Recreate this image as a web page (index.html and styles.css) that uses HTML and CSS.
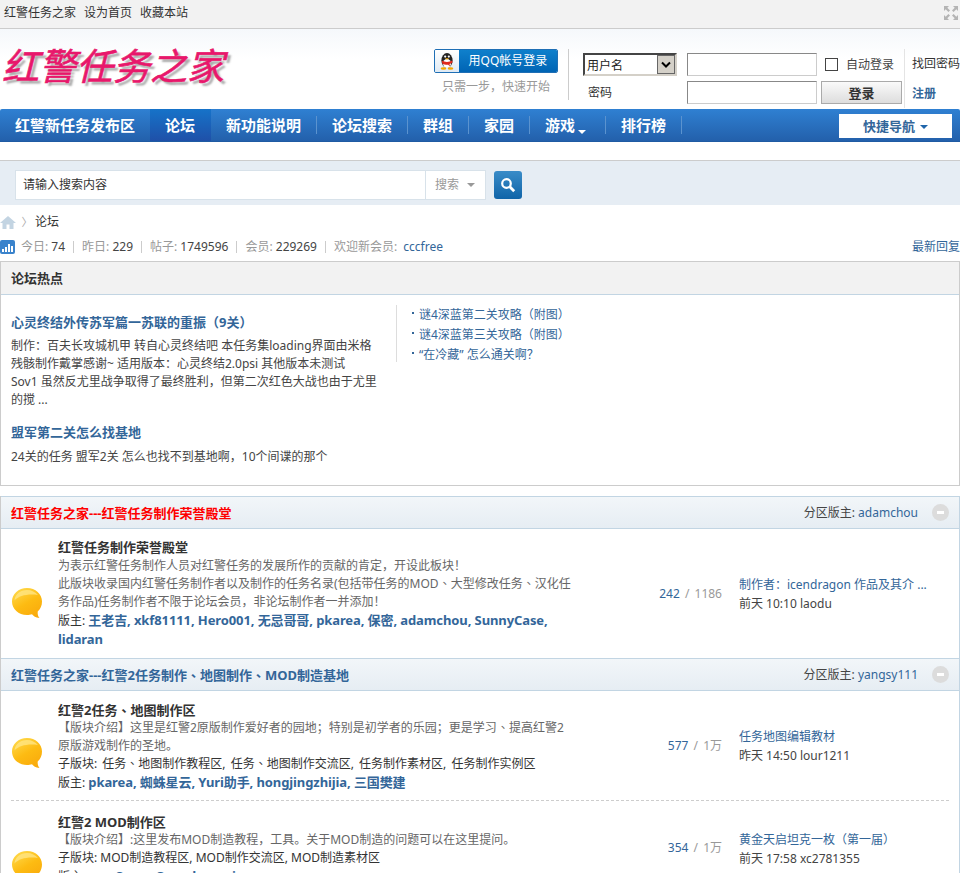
FILE: index.html
```html
<!DOCTYPE html>
<html lang="zh">
<head>
<meta charset="utf-8">
<title>红警任务之家</title>
<link rel="stylesheet" href="styles.css">
</head>
<body>
<div class="topbar">
  <div class="toplinks"><a>红警任务之家</a><a>设为首页</a><a>收藏本站</a></div>
  <svg class="expand" width="16" height="16" viewBox="0 0 16 16"><g fill="#b4b4b4"><path d="M1 1h5L4.3 2.7 7 5.4 5.4 7 2.7 4.3 1 6z"/><path d="M15 1v5l-1.7-1.7L10.6 7 9 5.4l2.7-2.7L10 1z"/><path d="M1 15v-5l1.7 1.7L5.4 9 7 10.6l-2.7 2.7L6 15z"/><path d="M15 15h-5l1.7-1.7L9 10.6 10.6 9l2.7 2.7L15 10z"/></g></svg>
</div>
<header class="hdr">
  <div class="logo">红警任务之家</div>
  <div class="login">
    <div class="qq">
      <div class="qqbtn">
        <span class="qqicon"><svg width="20" height="20" viewBox="0 0 20 20"><ellipse cx="10" cy="9.5" rx="5.6" ry="7.5" fill="#222"/><ellipse cx="10" cy="12.5" rx="4" ry="4.6" fill="#fff"/><circle cx="8.2" cy="5.6" r="1.1" fill="#fff"/><circle cx="11.8" cy="5.6" r="1.1" fill="#fff"/><path d="M8 7.2h4l-2 1.6z" fill="#f5a800"/><path d="M4.8 9.6c3 1.8 7.4 1.8 10.4 0l.3 2c-1 .8-2 1.2-3 1.4l.6 2.6-2-1.9c-1.5.2-3.600.1-5.800-1z" fill="#e02a1c"/><ellipse cx="6.500" cy="17.500" rx="2.800" ry="1.200" fill="#f5a800"/><ellipse cx="13.500" cy="17.500" rx="2.800" ry="1.200" fill="#f5a800"/></svg></span>
        <span class="qqtext">用QQ帐号登录</span>
      </div>
      <div class="qqsub">只需一步，快速开始</div>
    </div>
    <div class="form">
      <div class="sel"><span>用户名</span><i><svg width="10" height="8" viewBox="0 0 10 8"><path d="M1 1.500l4 4 4-4" fill="none" stroke="#000" stroke-width="2"/></svg></i></div>
      <input class="ipt" type="text" aria-label="用户名">
      <label class="auto"><span class="chk"></span>自动登录</label>
      <div class="pw">密码</div>
      <input class="ipt" type="password" aria-label="密码">
      <button class="sub">登录</button>
    </div>
    <div class="side"><a>找回密码</a><a class="reg">注册</a></div>
  </div>
</header>
<nav class="nav">
  <ul class="navlist">
    <li>红警新任务发布区</li>
    <li class="on">论坛</li>
    <li>新功能说明</li>
    <li>论坛搜索</li>
    <li>群组</li>
    <li>家园</li>
    <li class="drop">游戏<b class="wa"></b></li>
    <li>排行榜</li>
  </ul>
  <div class="quick">快捷导航<b class="ba"></b></div>
</nav>
<div class="search">
  <div class="sbox">
    <div class="skw">请输入搜索内容</div>
    <div class="stype">搜索<b class="ga"></b></div>
  </div>
  <div class="sbtn"><svg width="16" height="16" viewBox="0 0 16 16"><circle cx="6.500" cy="6.500" r="4.300" fill="none" stroke="#fff" stroke-width="2.200"/><path d="M9.800 9.800l4.400 4.400" stroke="#fff" stroke-width="2.800"/></svg></div>
</div>
<div class="crumb">
  <svg width="16" height="14" viewBox="0 0 16 14"><path d="M8 1L0 8h2.500v6h4V9.500h3V14h4V8H16z" fill="#c3d4e2"/></svg>
  <em>〉</em><span>论坛</span>
</div>
<div class="stats">
  <div class="statl">
    <svg class="bars" width="15" height="14" viewBox="0 0 15 14"><rect width="15" height="14" rx="2" fill="#3a83cc"/><g fill="#fff"><rect x="2" y="9" width="2" height="3"/><rect x="5" y="7" width="2" height="5"/><rect x="8" y="4" width="2" height="8"/><rect x="11" y="6" width="2" height="6"/></g></svg>
    <span class="st">今日: <b>74</b></span><i></i><span class="st">昨日: <b>229</b></span><i></i><span class="st">帖子: <b>1749596</b></span><i></i><span class="st">会员: <b>229269</b></span><i></i><span class="st">欢迎新会员: <a class="newm">cccfree</a></span>
  </div>
  <a>最新回复</a>
</div>
<section class="hot">
  <h2 class="hothd">论坛热点</h2>
  <div class="hotbd">
    <div class="hotl">
      <h3>心灵终结外传苏军篇一苏联的重振（9关）</h3>
      <p>制作：百夫长攻城机甲 转自心灵终结吧 本任务集loading界面由米格<br>残骸制作戴掌感谢~ 适用版本：心灵终结2.0psi 其他版本未测试<br>Sov1 虽然反尤里战争取得了最终胜利，但第二次红色大战也由于尤里<br>的搅 ...</p>
      <h3 class="h2nd">盟军第二关怎么找基地</h3>
      <p class="p2nd">24关的任务 盟军2关 怎么也找不到基地啊，10个间谍的那个</p>
    </div>
    <ul class="hotr">
      <li>谜4深蓝第二关攻略（附图）</li>
      <li>谜4深蓝第三关攻略（附图）</li>
      <li>“在冷藏” 怎么通关啊？</li>
    </ul>
  </div>
</section>
<section class="cat">
  <div class="cathd">
    <h2 class="red">红警任务之家---红警任务制作荣誉殿堂</h2>
    <div class="mod">分区版主: <a>adamchou</a></div>
    <span class="col"></span>
  </div>
  <div class="frow r1">
    <svg class="bub" width="32" height="32" viewBox="0 0 32 32"><use href="#bubble"/></svg>
    <div class="fmain">
      <h3>红警任务制作荣誉殿堂</h3>
      <p class="fd">为表示红警任务制作人员对红警任务的发展所作的贡献的肯定，开设此板块！<br>此版块收录国内红警任务制作者以及制作的任务名录(包括带任务的MOD<span class="dun">、</span>大型修改任务<span class="dun">、</span>汉化任务作品)任务制作者不限于论坛会员，非论坛制作者一并添加！</p>
      <p>版主: <a class="bl">王老吉, xkf81111, Hero001, 无忌哥哥, pkarea, 保密, adamchou, SunnyCase, lidaran</a></p>
    </div>
    <div class="fnum"><a>242</a> / <span>1186</span></div>
    <div class="flast"><a>制作者：icendragon 作品及其介 ...</a><div>前天 10:10 laodu</div></div>
  </div>
</section>
<section class="cat cat2">
  <div class="cathd">
    <h2>红警任务之家---红警2任务制作<span class="dun">、</span>地图制作<span class="dun">、</span>MOD制造基地</h2>
    <div class="mod">分区版主: <a>yangsy111</a></div>
    <span class="col"></span>
  </div>
  <div class="frow r2">
    <svg class="bub" width="32" height="32" viewBox="0 0 32 32"><use href="#bubble"/></svg>
    <div class="fmain">
      <h3>红警2任务<span class="dun">、</span>地图制作区</h3>
      <p class="fd">【版块介绍】这里是红警2原版制作爱好者的园地；特别是初学者的乐园；更是学习<span class="dun">、</span>提高红警2原版游戏制作的圣地。</p>
      <p class="subs">子版块: 任务<span class="dun">、</span>地图制作教程区, 任务<span class="dun">、</span>地图制作交流区, 任务制作素材区, 任务制作实例区</p>
      <p>版主: <a class="bl">pkarea, 蜘蛛星云, Yuri助手, hongjingzhijia, 三国樊建</a></p>
    </div>
    <div class="fnum"><a>577</a> / <span>1万</span></div>
    <div class="flast"><a>任务地图编辑教材</a><div>昨天 14:50 lour1211</div></div>
  </div>
  <div class="frow r3">
    <svg class="bub" width="32" height="32" viewBox="0 0 32 32"><use href="#bubble"/></svg>
    <div class="fmain">
      <h3>红警2 MOD制作区</h3>
      <p class="fd">【版块介绍】:这里发布MOD制造教程，工具。关于MOD制造的问题可以在这里提问。</p>
      <p>子版块: MOD制造教程区, MOD制作交流区, MOD制造素材区</p>
      <p>版主: <a class="bl">pzz, SunnyCase, kanegis</a></p>
    </div>
    <div class="fnum"><a>354</a> / <span>1万</span></div>
    <div class="flast"><a>黄金天启坦克一枚（第一届）</a><div>前天 17:58 xc2781355</div></div>
  </div>
</section>
<svg class="defs" width="0" height="0">
  <defs>
    <linearGradient id="bg" x1="0.200" y1="0" x2="0.800" y2="1"><stop offset="0" stop-color="#ffd94a"/><stop offset="0.500" stop-color="#fdbb12"/><stop offset="1" stop-color="#f9a90c"/></linearGradient>
    <g id="bubble"><path d="M16 1C7.500 1 1 7 1 14.500S7.500 28 16 28c2 0 3.500-.3 5-.8 1.500 2 3.500 3.300 7.500 3.800-1.500-1.500-2-3.800-1.800-6.500C29.500 22 31 18.500 31 14.500 31 7 24.500 1 16 1z" fill="url(#bg)"/><path d="M16 3C9 3 4 7.500 3.500 13.500 8 8.500 17 6.500 27 8c-2.500-3-6.500-5-11-5z" fill="#ffe789" opacity=".75"/></g>
  </defs>
</svg>
</body>
</html>
```
FILE: styles.css
```css
* { box-sizing: border-box; }
html, body { margin: 0; padding: 0; }
body { height: 873px; overflow: hidden; background: #fff; color: #444; font: 12px/18px "Noto Sans", "Noto Sans CJK SC", sans-serif; }
h2, h3, p, ul { margin: 0; padding: 0; }
ul { list-style: none; }
a { color: #369; }
.defs { position: absolute; }
.dun { display: inline-block; line-height: 1; font-family: "Noto Sans CJK TC", sans-serif; }

.topbar { height: 29px; background: #f2f2f2; border-bottom: 1px solid #ccc; display: flex; justify-content: space-between; align-items: center; padding: 0 1px 2px 4px; color: #333; }
.toplinks { display: flex; gap: 8px; }
.toplinks a { color: #333; }

.hdr { height: 80px; display: flex; justify-content: space-between; background: linear-gradient(#f5f8fb, #fff 30px); }
.logo { font: italic 400 37px/1 "Noto Sans CJK SC", sans-serif; -webkit-text-stroke: .6px #e8176b; color: #e8176b; text-shadow: 3px 3px 2px #aaa; padding: 17px 0 0 2px; }
.login { display: flex; padding-top: 20px; }
.qq { width: 135px; height: 51px; border-right: 1px solid #ccc; }
.qqbtn { width: 124px; height: 24px; display: flex; border: 1px solid #1f6fb5; border-radius: 2px; overflow: hidden; }
.qqicon { width: 24px; background: linear-gradient(#fff, #dfeaf4); display: flex; align-items: center; justify-content: center; }
.qqtext { flex: 1; background: linear-gradient(#0f80cc, #0064b4); color: #fff; text-align: center; line-height: 22px; }
.qqsub { width: 124px; text-align: center; color: #999; margin-top: 4px; line-height: 20px; }
.form { display: grid; grid-template-columns: 94px 130px 75px; column-gap: 10px; row-gap: 5px; margin-left: 14px; grid-auto-rows: 23px; padding-top: 4px; width: 321px; }
.form > :nth-child(3n) { margin-left: -6px; }
.sel { border: 2px solid; border-color: #444 #d4d0c8 #d4d0c8 #444; display: flex; justify-content: space-between; background: #fff; line-height: 21px; padding-left: 2px; color: #222; }
.sel i { width: 18px; background: #d4d0c8; border: 1px solid #666; display: flex; align-items: center; justify-content: center; }
.ipt { border: 1px solid #ccc; border-top: 1px solid #888; border-left: 1px solid #888; background: #fff; padding: 0; height: 23px; }
.auto { display: flex; align-items: center; gap: 8px; white-space: nowrap; color: #444; width: 80px; margin-left: -2px !important; }
.chk { width: 13px; height: 13px; border: 1px solid #444; background: #fff; display: block; }
.pw { padding-left: 5px; line-height: 23px; color: #333; }
.sub { height: 23px; border: 1px solid #aaa; background: linear-gradient(#fafafa, #ddd); font: bold 13px "Noto Sans CJK SC", sans-serif; color: #333; padding: 0; }
.side { border-left: 1px solid #e4e4e4; height: 59px; padding-left: 7px; display: flex; flex-direction: column; gap: 6px; }
.side a { color: #333; white-space: nowrap; margin-top: 6px; }
.side a.reg { color: #369; font-weight: 700; }

.nav { height: 33px; background: linear-gradient(#2f80d2, #2360ab); display: flex; justify-content: space-between; border-radius: 2px 2px 0 0; border-bottom: 1px solid #1f5ba3; }
.navlist { display: flex; }
.navlist li { position: relative; padding: 0 16px 0 15px; line-height: 31px; font-size: 15px; font-weight: 700; color: #fff; font-family: "Noto Sans CJK SC", sans-serif; }
.navlist li:first-child { padding-right: 15px; }
.navlist li::after { content: ""; position: absolute; right: 0; top: 7px; height: 18px; width: 1px; background: #5b93cf; }
.navlist li:first-child::after, .navlist li.on::after { display: none; }
.navlist li.on { background: linear-gradient(#1673c9, #1f50a8); }
.navlist li.drop { padding-right: 31px; }
.wa { position: absolute; left: 48px; bottom: 7px; border: 4px solid transparent; border-top: 4px solid #fff; border-bottom: 0; }
.quick { width: 113px; height: 24px; margin: 5px 8px 0 0; background: #fff; color: #369; font-size: 13px; font-weight: 700; text-align: center; line-height: 23px; font-family: "Noto Sans CJK SC", sans-serif; }
.ba { display: inline-block; margin-left: 5px; vertical-align: middle; border: 4px solid transparent; border-top: 4px solid #1f65aa; border-bottom: 0; }

.search { margin-top: 18px; height: 45px; background: #e6edf4; border-top: 1px solid #ccc; display: flex; align-items: center; padding: 3px 0 0 15px; gap: 8px; }
.sbox { width: 471px; height: 30px; background: #fff; border: 1px solid #d8e2ea; display: flex; }
.skw { flex: 1; padding-left: 7px; line-height: 28px; color: #333; }
.stype { width: 60px; border-left: 1px solid #d8e2ea; color: #999; line-height: 28px; padding-left: 9px; }
.ga { display: inline-block; margin-left: 8px; vertical-align: middle; border: 4px solid transparent; border-top: 4px solid #999; border-bottom: 0; }
.sbtn { width: 28px; height: 28px; border-radius: 3px; background: linear-gradient(#3a8cc8, #1064a8); display: flex; align-items: center; justify-content: center; }

.crumb { height: 31px; display: flex; align-items: center; padding: 2px 0 0 0; color: #333; }
.crumb em { font-style: normal; color: #aaa; width: 16px; text-align: center; margin-left: 3px; font-size: 11px; }
.stats { height: 25px; display: flex; justify-content: space-between; align-items: flex-start; color: #999; padding-top: 2px; }
.statl { display: flex; align-items: center; }
.bars { margin-right: 6px; }
.st b { font-weight: 400; color: #444; }
.statl i { width: 1px; height: 12px; background: #ccc; margin: 0 8px; }
.newm { margin-left: 3px; }

.hot { height: 225px; border: 1px solid #ccc; }
.hothd { height: 33px; background: #f2f2f2; border-bottom: 1px solid #c2d5e3; font-size: 13px; line-height: 32px; padding-left: 10px; color: #333; font-weight: 700; font-family: "Noto Sans CJK SC", sans-serif; }
.hotbd { display: flex; padding: 10px 10px 0; }
.hotl { width: 385px; padding-top: 7px; flex: none; }
.hotl h3 { font-size: 13px; line-height: 20px; color: #369; font-weight: 700; }
.hotl p { margin-top: 5px; color: #444; }
.hotl .h2nd { margin-top: 13px; }
.hotl .p2nd { margin-top: 6px; }
.hotr { border-left: 1px solid #ddd; height: 57px; padding-left: 14px; }
.hotr li { line-height: 20px; color: #369; position: relative; padding-left: 8px; white-space: nowrap; }
.hotr li::before { content: ""; position: absolute; left: 1px; top: 7px; width: 2px; height: 2px; background: #369; }

.cat { margin-top: 10px; border-left: 1px solid #ccc; border-right: 1px solid #c2d5e3; }
.cat2 { margin-top: 0; }
.cathd { height: 33px; background: linear-gradient(#f2f6f9, #e6edf3); border: 1px solid #c2d5e3; border-width: 1px 0; display: flex; align-items: center; padding: 0 10px; }
.cathd h2 { flex: 1; font-size: 13px; color: #369; font-weight: 700; }
.cathd h2.red { color: #f00; }
.mod { color: #444; }
.col { width: 17px; height: 17px; border-radius: 50%; background: #dcdcdc; margin-left: 14px; position: relative; }
.col::after { content: ""; position: absolute; left: 5px; top: 7px; width: 7px; height: 3px; background: #fff; }
.frow { display: grid; grid-template-columns: 47px 514px 150px 1fr; align-items: center; margin: 0 10px; }
.r1 { height: 129px; }
.r2 { height: 110px; border-bottom: 1px dashed #cdcdcd; }
.r3 { height: 110px; align-items: start; padding-top: 11px; }
.bub { display: block; }
.r1 .bub { margin-top: 18px; }
.r2 .bub { margin-top: 14px; }
.r3 .bub { margin-top: 38px; }
.fmain { color: #333; }
.r1 .fmain h3 { line-height: 19px; }
.r2 .fmain { padding-top: 2px; }
.r3 .fmain { padding-top: 1px; }
.fmain h3 { font-size: 13px; line-height: 18px; color: #333; font-weight: 700; }
.fd { color: #666; }
.subs { word-spacing: 2px; }
.bl { font-size: 13px; font-weight: 700; letter-spacing: -.1px; }
.fnum { text-align: right; color: #999; word-spacing: 2px; }
.flast { padding-left: 17px; white-space: nowrap; color: #444; line-height: 19px; }
.r3 .fnum { margin-top: 27px; }
.r3 .flast { margin-top: 18px; }
```
